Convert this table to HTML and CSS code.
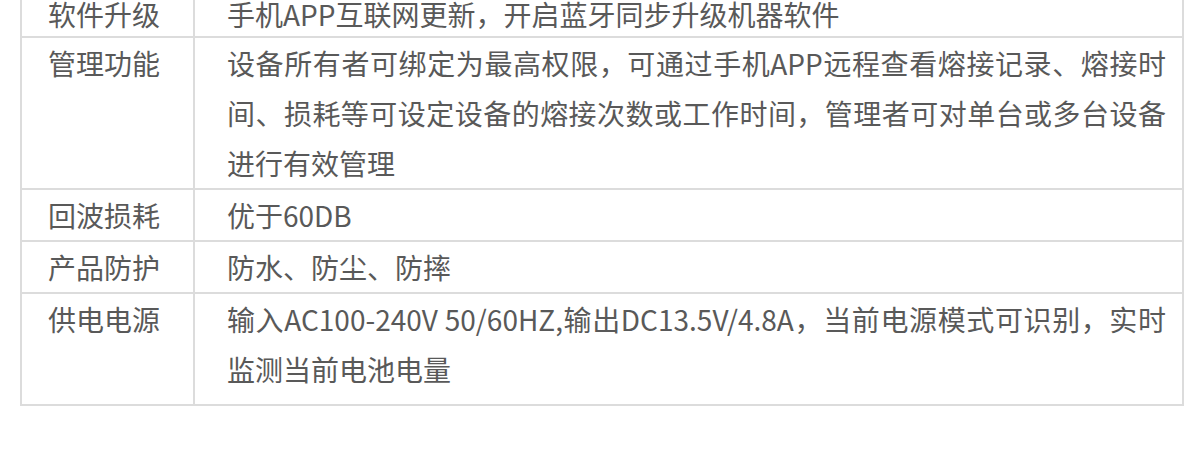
FILE: index.html
```html
<!DOCTYPE html>
<html lang="zh-CN">
<head>
    <meta charset="UTF-8">
    <meta name="viewport" content="width=device-width, initial-scale=1.0">
    <title>产品参数</title>
    <link rel="stylesheet" href="styles.css">
</head>
<body>
    <div class="page">
        <table class="spec">
            <tr class="first">
                <th>软件升级</th>
                <td>手机APP互联网更新，开启蓝牙同步升级机器软件</td>
            </tr>
            <tr>
                <th>管理功能</th>
                <td>设备所有者可绑定为最高权限，可通过手机APP远程查看熔接记录、熔接时间、损耗等可设定设备的熔接次数或工作时间，管理者可对单台或多台设备进行有效管理</td>
            </tr>
            <tr>
                <th>回波损耗</th>
                <td>优于60DB</td>
            </tr>
            <tr>
                <th>产品防护</th>
                <td>防水、防尘、防摔</td>
            </tr>
            <tr class="last">
                <th>供电电源</th>
                <td>输入AC100-240V 50/60HZ,输出DC13.5V/4.8A，当前电源模式可识别，实时监测当前电池电量</td>
            </tr>
        </table>
    </div>
</body>
</html>
```

FILE: styles.css
```css
body { margin: 0; background-color: #fff; font-family: "Noto Sans CJK SC", "Noto Sans", sans-serif; color: #595959; }
.page { padding: 0 15px 0 20px; margin-top: -10px; }
.spec { width: 1164px; border-collapse: collapse; border: 2px solid #c6c6c6; font-size: 28px; line-height: 50px; }
.spec th, .spec td { border: 2px solid #dcdcdc; padding: 0; vertical-align: top; text-align: left; font-weight: 400; }
.spec th { width: 145px; padding-left: 26px; }
.spec td { padding-left: 32px; padding-right: 16px; text-align: justify; }
.spec tr.first th, .spec tr.first td { line-height: 44px; }
.spec tr.last th, .spec tr.last td { padding-bottom: 10px; }
```
